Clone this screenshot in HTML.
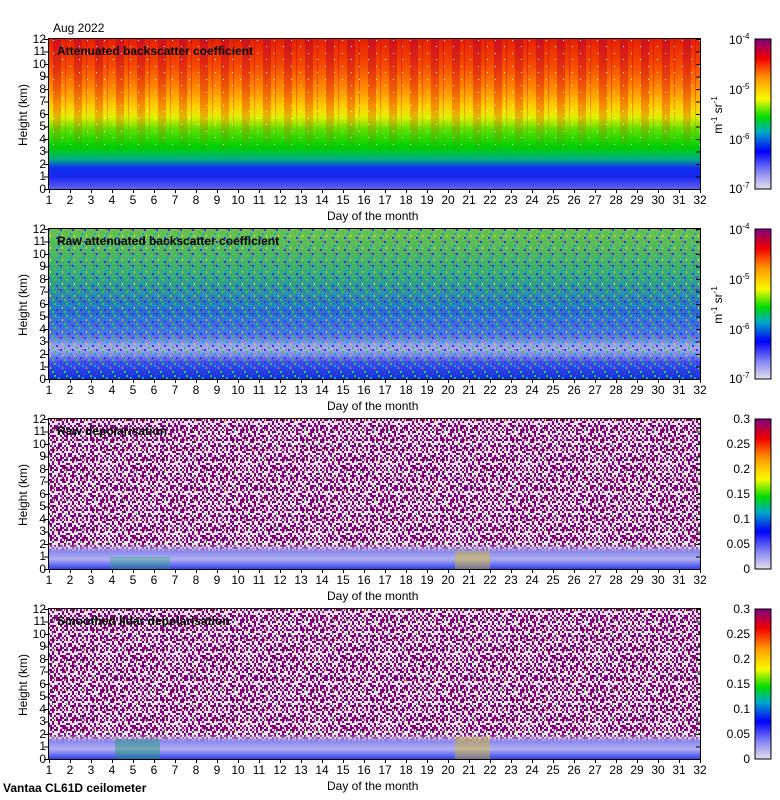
<!DOCTYPE html>
<html><head><meta charset="utf-8"><style>
body{margin:0;background:#fff;width:780px;height:800px;position:relative;overflow:hidden;font-family:"Liberation Sans",sans-serif;font-size:12px;color:#000}
svg{position:absolute;left:0;top:0}
.t{position:absolute;white-space:nowrap;line-height:12px}
.b{font-weight:bold}
.xl{position:absolute;left:38.5px;display:flex;line-height:12px}
.xl span{width:21px;text-align:center}
.yl{position:absolute;left:18px;width:28px;text-align:right}
.yl div{height:12.5px;line-height:12.5px}
.cb{position:absolute;left:716px;width:34px;text-align:right}
.cb div{height:25px;line-height:12px;margin-top:0}
sup{font-size:8px;vertical-align:5px;line-height:0}
.rot{position:absolute;transform:rotate(-90deg);text-align:center;white-space:nowrap}
</style></head><body>
<svg width="780" height="800" xmlns="http://www.w3.org/2000/svg">
<defs>
<linearGradient id="g1" x1="0" y1="0" x2="0" y2="1">
<stop offset="0" stop-color="#e82000"/><stop offset="0.17" stop-color="#f44800"/><stop offset="0.33" stop-color="#ff8c00"/><stop offset="0.45" stop-color="#ffd000"/><stop offset="0.52" stop-color="#e0f000"/><stop offset="0.6" stop-color="#60e000"/><stop offset="0.72" stop-color="#00d000"/><stop offset="0.8" stop-color="#00b080"/><stop offset="0.86" stop-color="#1030f0"/><stop offset="0.92" stop-color="#1828f0"/><stop offset="1" stop-color="#6060f0"/></linearGradient>
<linearGradient id="st" x1="0" y1="0" x2="0" y2="1"><stop offset="0" stop-color="#b00040" stop-opacity="0.5"/><stop offset="0.45" stop-color="#e00000" stop-opacity="0.3"/><stop offset="0.75" stop-color="#e00000" stop-opacity="0"/></linearGradient>
<pattern id="stripes" x="49" y="0" width="21" height="150" patternUnits="userSpaceOnUse"><rect x="4" y="0" width="8" height="150" fill="url(#st)"/><rect x="16" y="0" width="1" height="150" fill="url(#st)"/></pattern>
<pattern id="dots" x="0" y="0" width="17" height="13" patternUnits="userSpaceOnUse"><rect x="2" y="1" width="1" height="1" fill="#fff"/><rect x="11" y="7" width="1" height="1" fill="#fff"/></pattern>
<linearGradient id="g2" x1="0" y1="0" x2="0" y2="1">
<stop offset="0" stop-color="#70c050"/><stop offset="0.3" stop-color="#38a880"/><stop offset="0.55" stop-color="#2870d0"/><stop offset="0.7" stop-color="#5070e8"/><stop offset="0.8" stop-color="#a8acf0"/><stop offset="0.9" stop-color="#3848f0"/><stop offset="1" stop-color="#1030e0"/></linearGradient>
<pattern id="n2" width="12" height="12" patternUnits="userSpaceOnUse"><rect x="0" y="0" width="2" height="2" fill="#2040f0"/><rect x="6" y="2" width="2" height="2" fill="#30d030"/><rect x="2" y="6" width="1" height="2" fill="#f0f000"/><rect x="8" y="8" width="2" height="2" fill="#2040f0"/><rect x="4" y="10" width="2" height="2" fill="#30d030"/><rect x="10" y="4" width="2" height="2" fill="#00b0c0"/><rect x="10" y="0" width="1" height="1" fill="#e00000"/></pattern>
<pattern id="pa" width="10" height="10" patternUnits="userSpaceOnUse"><rect x="0" y="0" width="2" height="2" fill="#800080"/><rect x="6" y="0" width="2" height="2" fill="#800080"/><rect x="2" y="2" width="2" height="2" fill="#800080"/><rect x="8" y="4" width="2" height="2" fill="#800080"/><rect x="4" y="6" width="2" height="2" fill="#800080"/><rect x="0" y="6" width="2" height="2" fill="#800080"/><rect x="6" y="8" width="2" height="2" fill="#800080"/><rect x="2" y="8" width="2" height="2" fill="#800080"/><rect x="4" y="0" width="1" height="2" fill="#e00000"/></pattern>
<pattern id="pb" width="14" height="14" patternUnits="userSpaceOnUse"><rect x="2" y="0" width="2" height="2" fill="#800080"/><rect x="10" y="2" width="2" height="2" fill="#800080"/><rect x="6" y="4" width="2" height="2" fill="#800080"/><rect x="0" y="6" width="2" height="2" fill="#800080"/><rect x="12" y="8" width="2" height="2" fill="#800080"/><rect x="4" y="10" width="2" height="2" fill="#800080"/><rect x="8" y="12" width="2" height="2" fill="#800080"/><rect x="2" y="12" width="2" height="2" fill="#800080"/><rect x="10" y="10" width="1" height="2" fill="#00c000"/><rect x="6" y="0" width="1" height="1" fill="#3040f0"/><rect x="0" y="2" width="1" height="1" fill="#f0d000"/><rect x="8" y="6" width="2" height="2" fill="#800080"/></pattern>
<linearGradient id="bot" x1="0" y1="0" x2="0" y2="1"><stop offset="0" stop-color="#e4e4e8" stop-opacity="0"/><stop offset="0.3" stop-color="#8888f0"/><stop offset="0.6" stop-color="#b0b0f0"/><stop offset="1" stop-color="#3040f0"/></linearGradient>
<linearGradient id="cb1" x1="0" y1="0" x2="0" y2="1">
<stop offset="0" stop-color="#800080"/><stop offset="0.13" stop-color="#f00000"/><stop offset="0.26" stop-color="#ff9600"/><stop offset="0.4" stop-color="#fafa00"/><stop offset="0.52" stop-color="#00dc00"/><stop offset="0.62" stop-color="#00aac8"/><stop offset="0.75" stop-color="#0000fa"/><stop offset="0.88" stop-color="#8282f5"/><stop offset="1" stop-color="#e1e1eb"/></linearGradient>
<pattern id="xt" x="49" y="0" width="21" height="10" patternUnits="userSpaceOnUse"><rect x="0" y="0" width="1" height="4" fill="#000"/></pattern>
<pattern id="yt" x="0" y="0" width="5" height="12.5" patternUnits="userSpaceOnUse"><rect x="0" y="0" width="5" height="1" fill="#000"/></pattern>
<g id="frame"><rect x="44" y="0" width="5" height="151" fill="url(#yt)"/><rect x="696" y="0" width="4" height="151" fill="url(#yt)"/><rect x="49" y="150" width="652" height="5" fill="url(#xt)"/><rect x="48.5" y="-0.5" width="652" height="151" fill="none" stroke="#000"/></g>
</defs>
<g transform="translate(0,39)"><rect x="49" y="0" width="651" height="150" fill="url(#g1)"/><rect x="49" y="0" width="651" height="150" fill="url(#stripes)"/><rect x="49" y="0" width="651" height="110" fill="url(#dots)"/><use href="#frame"/>
<rect x="755" y="0" width="16" height="150" fill="url(#cb1)" stroke="#000"/></g>
<g transform="translate(0,229)"><rect x="49" y="0" width="651" height="150" fill="url(#g2)"/><rect x="49" y="0" width="651" height="150" fill="url(#n2)"/><use href="#frame"/>
<rect x="755" y="0" width="16" height="150" fill="url(#cb1)" stroke="#000"/></g>
<g transform="translate(0,419)"><rect x="49" y="0" width="651" height="150" fill="#e4e4e8"/><rect x="49" y="0" width="651" height="150" fill="url(#pa)"/><rect x="49" y="0" width="651" height="150" fill="url(#pb)"/><rect x="49" y="125" width="651" height="25" fill="url(#bot)"/><rect x="110" y="138" width="60" height="12" fill="#20b060" opacity="0.35"/><rect x="455" y="132" width="35" height="18" fill="#e0c000" opacity="0.4"/><use href="#frame"/>
<rect x="755" y="0" width="16" height="150" fill="url(#cb1)" stroke="#000"/></g>
<g transform="translate(0,609)"><rect x="49" y="0" width="651" height="150" fill="#e4e4e8"/><rect x="49" y="0" width="651" height="150" fill="url(#pa)"/><rect x="49" y="0" width="651" height="150" fill="url(#pb)"/><rect x="49" y="125" width="651" height="25" fill="url(#bot)"/><rect x="115" y="130" width="45" height="20" fill="#10a060" opacity="0.4"/><rect x="455" y="128" width="35" height="22" fill="#e0c000" opacity="0.4"/><use href="#frame"/>
<rect x="755" y="0" width="16" height="150" fill="url(#cb1)" stroke="#000"/></g>
</svg>

<div class="t" style="left:53px;top:22px">Aug 2022</div>
<div class="t b" style="left:57px;top:45px">Attenuated backscatter coefficient</div>
<div class="t b" style="left:57px;top:235px">Raw attenuated backscatter coefficient</div>
<div class="t b" style="left:57px;top:425px">Raw depolarisation</div>
<div class="t b" style="left:57px;top:615px">Smoothed lidar depolarisation</div>
<div class="t b" style="left:3px;top:782px">Vantaa CL61D ceilometer</div>

<div class="xl" style="top:194px"><span>1</span><span>2</span><span>3</span><span>4</span><span>5</span><span>6</span><span>7</span><span>8</span><span>9</span><span>10</span><span>11</span><span>12</span><span>13</span><span>14</span><span>15</span><span>16</span><span>17</span><span>18</span><span>19</span><span>20</span><span>21</span><span>22</span><span>23</span><span>24</span><span>25</span><span>26</span><span>27</span><span>28</span><span>29</span><span>30</span><span>31</span><span>32</span></div>
<div class="xl" style="top:384px"><span>1</span><span>2</span><span>3</span><span>4</span><span>5</span><span>6</span><span>7</span><span>8</span><span>9</span><span>10</span><span>11</span><span>12</span><span>13</span><span>14</span><span>15</span><span>16</span><span>17</span><span>18</span><span>19</span><span>20</span><span>21</span><span>22</span><span>23</span><span>24</span><span>25</span><span>26</span><span>27</span><span>28</span><span>29</span><span>30</span><span>31</span><span>32</span></div>
<div class="xl" style="top:574px"><span>1</span><span>2</span><span>3</span><span>4</span><span>5</span><span>6</span><span>7</span><span>8</span><span>9</span><span>10</span><span>11</span><span>12</span><span>13</span><span>14</span><span>15</span><span>16</span><span>17</span><span>18</span><span>19</span><span>20</span><span>21</span><span>22</span><span>23</span><span>24</span><span>25</span><span>26</span><span>27</span><span>28</span><span>29</span><span>30</span><span>31</span><span>32</span></div>
<div class="xl" style="top:764px"><span>1</span><span>2</span><span>3</span><span>4</span><span>5</span><span>6</span><span>7</span><span>8</span><span>9</span><span>10</span><span>11</span><span>12</span><span>13</span><span>14</span><span>15</span><span>16</span><span>17</span><span>18</span><span>19</span><span>20</span><span>21</span><span>22</span><span>23</span><span>24</span><span>25</span><span>26</span><span>27</span><span>28</span><span>29</span><span>30</span><span>31</span><span>32</span></div>

<div class="yl" style="top:32.75px"><div>12</div><div>11</div><div>10</div><div>9</div><div>8</div><div>7</div><div>6</div><div>5</div><div>4</div><div>3</div><div>2</div><div>1</div><div>0</div></div>
<div class="yl" style="top:222.75px"><div>12</div><div>11</div><div>10</div><div>9</div><div>8</div><div>7</div><div>6</div><div>5</div><div>4</div><div>3</div><div>2</div><div>1</div><div>0</div></div>
<div class="yl" style="top:412.75px"><div>12</div><div>11</div><div>10</div><div>9</div><div>8</div><div>7</div><div>6</div><div>5</div><div>4</div><div>3</div><div>2</div><div>1</div><div>0</div></div>
<div class="yl" style="top:602.75px"><div>12</div><div>11</div><div>10</div><div>9</div><div>8</div><div>7</div><div>6</div><div>5</div><div>4</div><div>3</div><div>2</div><div>1</div><div>0</div></div>

<div class="t" style="left:327px;top:210px">Day of the month</div>
<div class="t" style="left:327px;top:400px">Day of the month</div>
<div class="t" style="left:327px;top:590px">Day of the month</div>
<div class="t" style="left:327px;top:780px">Day of the month</div>

<div class="rot" style="left:-12px;top:108px;width:70px">Height (km)</div>
<div class="rot" style="left:-12px;top:298px;width:70px">Height (km)</div>
<div class="rot" style="left:-12px;top:488px;width:70px">Height (km)</div>
<div class="rot" style="left:-12px;top:678px;width:70px">Height (km)</div>

<div class="t" style="left:729px;top:34px">10<sup>-4</sup></div>
<div class="t" style="left:729px;top:84px">10<sup>-5</sup></div>
<div class="t" style="left:729px;top:134px">10<sup>-6</sup></div>
<div class="t" style="left:729px;top:183px">10<sup>-7</sup></div>
<div class="rot" style="left:688px;top:108px;width:60px">m<sup>-1</sup> sr<sup>-1</sup></div>
<div class="t" style="left:729px;top:224px">10<sup>-4</sup></div>
<div class="t" style="left:729px;top:274px">10<sup>-5</sup></div>
<div class="t" style="left:729px;top:324px">10<sup>-6</sup></div>
<div class="t" style="left:729px;top:373px">10<sup>-7</sup></div>
<div class="rot" style="left:688px;top:298px;width:60px">m<sup>-1</sup> sr<sup>-1</sup></div>

<div class="cb" style="top:413px"><div>0.3</div><div>0.25</div><div>0.2</div><div>0.15</div><div>0.1</div><div>0.05</div><div>0</div></div>
<div class="cb" style="top:603px"><div>0.3</div><div>0.25</div><div>0.2</div><div>0.15</div><div>0.1</div><div>0.05</div><div>0</div></div>
</body></html>
